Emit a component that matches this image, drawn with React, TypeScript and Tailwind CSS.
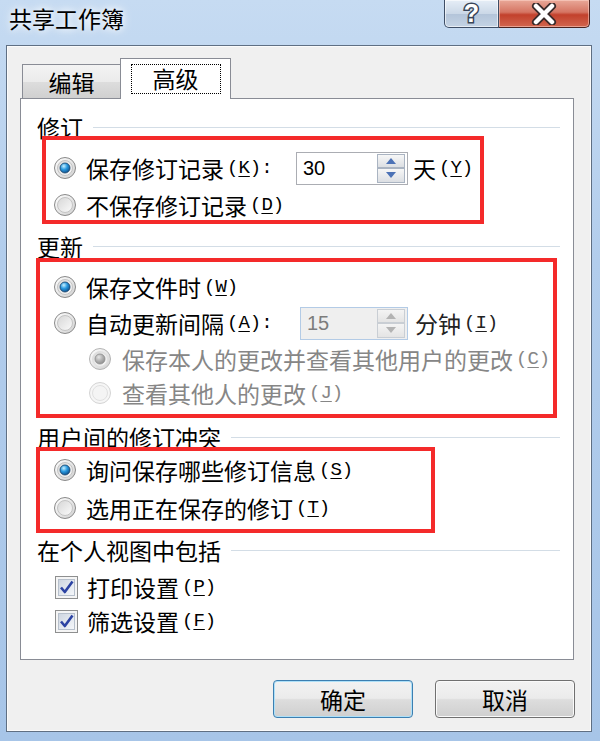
import React from "react";

type RadioProps = { checked?: boolean; disabled?: boolean };

function Radio({ checked = false, disabled = false }: RadioProps) {
  return (
    <svg width="24" height="24" viewBox="0 0 24 24" className="shrink-0">
      <defs>
        <linearGradient id="rbFace" x1="0" y1="0" x2="1" y2="1">
          <stop offset="0" stopColor="#ffffff" />
          <stop offset="1" stopColor="#d0d0d0" />
        </linearGradient>
        <linearGradient id="rbInner" x1="0" y1="0" x2="1" y2="1">
          <stop offset="0" stopColor="#d6d6d6" />
          <stop offset="1" stopColor="#fbfbfb" />
        </linearGradient>
        <radialGradient id="rbDot" cx="0.38" cy="0.32" r="0.75">
          <stop offset="0" stopColor="#c8f0ff" />
          <stop offset="0.45" stopColor="#2a9ae0" />
          <stop offset="1" stopColor="#0b4782" />
        </radialGradient>
        <radialGradient id="rbDotOff" cx="0.38" cy="0.32" r="0.75">
          <stop offset="0" stopColor="#e6e6e6" />
          <stop offset="0.5" stopColor="#b2b2b2" />
          <stop offset="1" stopColor="#8a8a8a" />
        </radialGradient>
      </defs>
      <circle
        cx="12"
        cy="12"
        r="10.5"
        fill={disabled && !checked ? "#f6f6f6" : "url(#rbFace)"}
        stroke={disabled ? (checked ? "#b4b4b4" : "#d4d4d4") : "#8a8a8a"}
      />
      <circle
        cx="12"
        cy="12"
        r="7.5"
        fill={disabled && !checked ? "#f4f4f4" : "url(#rbInner)"}
        stroke={disabled ? "#e0e0e0" : "#c4c4c4"}
      />
      {checked && (
        <circle
          cx="12"
          cy="12"
          r="5"
          fill={disabled ? "url(#rbDotOff)" : "url(#rbDot)"}
          stroke={disabled ? "#8e8e8e" : "#174169"}
          strokeWidth="0.8"
        />
      )}
    </svg>
  );
}

function Check() {
  return (
    <svg width="23" height="23" viewBox="0 0 23 23" className="shrink-0">
      <defs>
        <linearGradient id="cbIn" x1="0" y1="0" x2="1" y2="1">
          <stop offset="0" stopColor="#cdd5e0" />
          <stop offset="1" stopColor="#f6f8fb" />
        </linearGradient>
      </defs>
      <rect x="0.5" y="0.5" width="22" height="22" fill="#f5f5f5" stroke="#8e8f8f" />
      <rect x="3.5" y="3.5" width="16" height="16" fill="url(#cbIn)" stroke="#b7c0cc" />
      <path
        d="M6 11.5 L9.8 16 L17.5 5.5"
        fill="none"
        stroke="#2c43a3"
        strokeWidth="2.6"
        strokeLinejoin="round"
      />
    </svg>
  );
}

function Key({ k, colon = false }: { k: string; colon?: boolean }) {
  return (
    <span className="ml-[3px] font-['Liberation_Mono',monospace] text-[19px] leading-none">
      (<span className="underline underline-offset-[3px]">{k}</span>){colon ? ":" : ""}
    </span>
  );
}

function Legend({ text }: { text: string }) {
  return (
    <div className="flex h-[24px] items-center pl-[16px] pr-[13px]">
      <span className="text-[23px] leading-none">{text}</span>
      <div className="ml-[10px] h-px flex-1 bg-[#d3dde6]" />
    </div>
  );
}

function SpinHalf({ up = false, disabled = false }: { up?: boolean; disabled?: boolean }) {
  return (
    <div
      className={`flex flex-1 items-center justify-center border ${
        disabled
          ? "border-[#c9ced4] bg-[linear-gradient(180deg,#f4f4f4,#e4e4e4)]"
          : "border-[#aab4c2] bg-[linear-gradient(180deg,#f7f7f7,#dcdfe3)]"
      }`}
    >
      <svg width="10" height="6" viewBox="0 0 10 6">
        <path
          d={up ? "M0 6 L5 0 L10 6Z" : "M0 0 L5 6 L10 0Z"}
          fill={disabled ? "#b3b3b3" : "#4c72b6"}
        />
      </svg>
    </div>
  );
}

function Spin({ value, disabled = false }: { value: string; disabled?: boolean }) {
  return (
    <div
      className={`flex h-[33px] items-center border ${
        disabled ? "w-[108px] border-[#b3cbe6] bg-[#efefef]" : "w-[112px] border-[#abadb3] bg-white"
      }`}
    >
      <span
        className={`flex-1 pl-[6px] font-['Liberation_Sans',sans-serif] text-[20px] leading-none ${
          disabled ? "text-[#7c7c7c]" : "text-black"
        }`}
      >
        {value}
      </span>
      <div className="mr-[2px] flex h-[29px] w-[28px] flex-col">
        <SpinHalf up disabled={disabled} />
        <SpinHalf disabled={disabled} />
      </div>
    </div>
  );
}

export default function App() {
  return (
    <div className="flex h-[741px] w-[600px] flex-col overflow-hidden bg-[linear-gradient(180deg,#c6dbf2_0%,#b2cdec_35%,#a7c5e8_100%)] pb-[9px] pl-[6px] pr-[8px] font-['Noto_Sans_CJK_SC',sans-serif] text-black">
      {/* title bar */}
      <div className="-ml-[6px] -mr-[8px] flex h-[45px] shrink-0 items-start">
        <span className="ml-[9px] mt-[6px] text-[23px] leading-[24px] [text-shadow:0_0_6px_#fff,0_0_12px_#fff]">
          共享工作簿
        </span>
        <div className="ml-auto mr-[10px] flex h-[28px]">
          <div className="flex w-[55px] items-center justify-center rounded-bl-[5px] border border-t-0 border-[#3e4e66] bg-[linear-gradient(180deg,#e6eef7_0%,#cbd8e7_50%,#b3c4d9_51%,#c4d3e4_100%)] shadow-[inset_0_0_0_1px_rgba(255,255,255,0.6)]">
            <span className="font-['Liberation_Sans',sans-serif] text-[25px] font-bold leading-none text-white [-webkit-text-stroke:3px_#3a4658] [paint-order:stroke_fill]">
              ?
            </span>
          </div>
          <div className="flex w-[91px] items-center justify-center rounded-br-[5px] border border-l-0 border-t-0 border-[#4a2320] bg-[linear-gradient(180deg,#e9a898_0%,#d57563_45%,#c2412c_55%,#d2664f_100%)] shadow-[inset_0_0_0_1px_rgba(255,220,210,0.5)]">
            <svg width="26" height="22" viewBox="0 0 26 22">
              <path d="M5 3 L21 19 M21 3 L5 19" stroke="#3a2b2b" strokeWidth="8" strokeLinecap="round" />
              <path d="M5 3 L21 19 M21 3 L5 19" stroke="#ffffff" strokeWidth="4.5" strokeLinecap="round" />
            </svg>
          </div>
        </div>
      </div>

      {/* client area */}
      <div className="flex flex-1 flex-col border border-[#5f6f83] bg-[#f0f0f0] pl-[13px] pt-[13px] shadow-[inset_0_0_0_1px_#fbfbfb]">
        {/* tabs */}
        <div className="flex h-[40px] w-[554px] items-end">
          <div className="ml-[2px] flex h-[35px] w-[99px] items-center justify-center border border-b-0 border-[#898c95] bg-[linear-gradient(180deg,#f3f3f3_0%,#ebebeb_50%,#dddddd_51%,#cfcfcf_100%)] text-[23px] leading-none">
            编辑
          </div>
          <div className="relative z-10 -ml-px flex h-[41px] w-[111px] items-center justify-center border border-b-0 border-[#898c95] bg-white pb-[1px]">
            <div className="flex h-[30px] w-[90px] items-center justify-center border border-dotted border-black text-[23px] leading-none">
              高级
            </div>
          </div>
        </div>

        {/* panel */}
        <div className="-mt-px flex h-[562px] w-[554px] flex-col border border-[#898c95] bg-white">
          <div className="mt-[16px]">
            <Legend text="修订" />
          </div>
          <div className="-mt-[3px] ml-[21px] flex h-[88px] w-[442px] flex-col border-4 border-[#f42a2a] pl-[7px] pt-[10px]">
            <div className="flex h-[36px] items-center">
              <Radio checked />
              <div className="ml-[9px] flex w-[210px] items-center text-[23px] leading-none">
                保存修订记录
                <Key k="K" colon />
              </div>
              <Spin value="30" />
              <span className="ml-[5px] flex items-center text-[23px] leading-none">
                天<Key k="Y" />
              </span>
            </div>
            <div className="mt-[4px] flex h-[30px] items-center">
              <Radio />
              <div className="ml-[9px] flex items-center text-[23px] leading-none">
                不保存修订记录
                <Key k="D" />
              </div>
            </div>
          </div>

          <div className="mt-[10px]">
            <Legend text="更新" />
          </div>
          <div className="ml-[15px] flex h-[160px] w-[521px] flex-col border-4 border-[#f42a2a] pl-[13px] pt-[7px]">
            <div className="flex h-[36px] items-center">
              <Radio checked />
              <div className="ml-[9px] flex items-center text-[23px] leading-none">
                保存文件时
                <Key k="W" />
              </div>
            </div>
            <div className="flex h-[36px] items-center">
              <Radio />
              <div className="ml-[9px] flex w-[214px] items-center text-[23px] leading-none">
                自动更新间隔
                <Key k="A" colon />
              </div>
              <Spin value="15" disabled />
              <span className="ml-[7px] flex items-center text-[23px] leading-none text-[#222]">
                分钟<Key k="I" />
              </span>
            </div>
            <div className="flex h-[36px] items-center pl-[35px] text-[#868686]">
              <Radio checked disabled />
              <div className="ml-[10px] flex items-center text-[23px] leading-none">
                保存本人的更改并查看其他用户的更改
                <Key k="C" />
              </div>
            </div>
            <div className="flex h-[32px] items-center pl-[35px] text-[#868686]">
              <Radio disabled />
              <div className="ml-[10px] flex items-center text-[23px] leading-none">
                查看其他人的更改
                <Key k="J" />
              </div>
            </div>
          </div>

          <div className="mt-[7px]">
            <Legend text="用户间的修订冲突" />
          </div>
          <div className="-mt-[2px] ml-[15px] flex h-[86px] w-[399px] flex-col border-4 border-[#f42a2a] pl-[13px] pt-[1px]">
            <div className="flex h-[36px] items-center">
              <Radio checked />
              <div className="ml-[9px] flex items-center text-[23px] leading-none">
                询问保存哪些修订信息
                <Key k="S" />
              </div>
            </div>
            <div className="mt-[2px] flex h-[36px] items-center">
              <Radio />
              <div className="ml-[9px] flex items-center text-[23px] leading-none">
                选用正在保存的修订
                <Key k="T" />
              </div>
            </div>
          </div>

          <div className="mt-[5px]">
            <Legend text="在个人视图中包括" />
          </div>
          <div className="mt-[7px] flex flex-col pl-[34px]">
            <div className="flex h-[36px] items-center">
              <Check />
              <div className="ml-[9px] flex items-center text-[23px] leading-none">
                打印设置
                <Key k="P" />
              </div>
            </div>
            <div className="flex h-[32px] items-center">
              <Check />
              <div className="ml-[9px] flex items-center text-[23px] leading-none">
                筛选设置
                <Key k="F" />
              </div>
            </div>
          </div>
        </div>

        {/* buttons */}
        <div className="mt-[20px] flex w-[571px] justify-end gap-[22px] pr-[16px]">
          <button className="flex h-[38px] w-[140px] items-center justify-center rounded-[4px] border border-[#3c7fb1] bg-[linear-gradient(180deg,#f2f2f2_0%,#ebebeb_48%,#dddddd_52%,#cfcfcf_100%)] text-[23px] leading-none shadow-[inset_0_0_0_1px_#aee0f8]">
            确定
          </button>
          <button className="flex h-[38px] w-[140px] items-center justify-center rounded-[4px] border border-[#707070] bg-[linear-gradient(180deg,#f2f2f2_0%,#ebebeb_48%,#dddddd_52%,#cfcfcf_100%)] text-[23px] leading-none shadow-[inset_0_0_0_1px_#fafafa]">
            取消
          </button>
        </div>
      </div>
    </div>
  );
}
